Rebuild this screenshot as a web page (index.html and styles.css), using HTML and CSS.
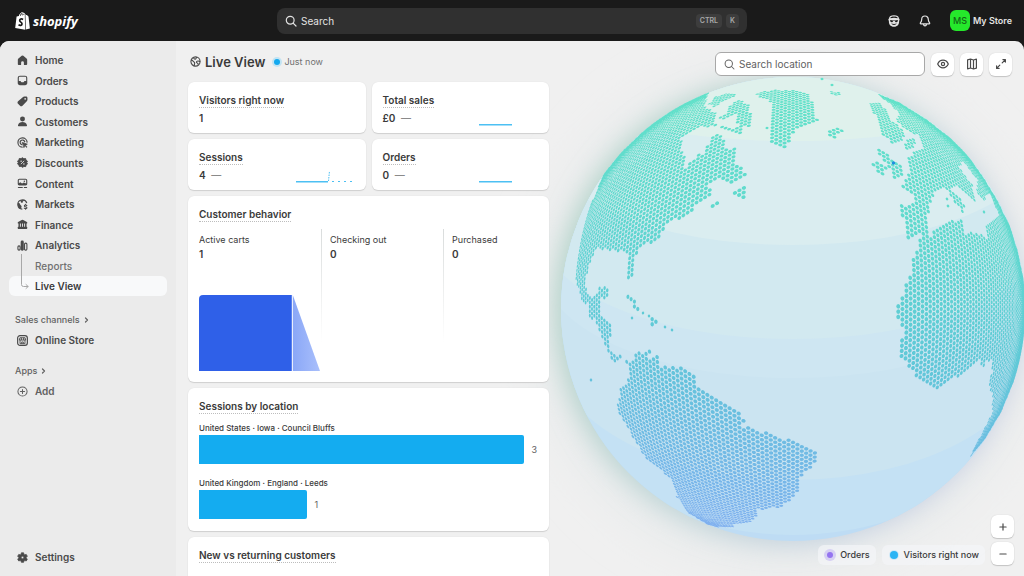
FILE: index.html
```html
<!DOCTYPE html>
<html lang="en">
<head>
<meta charset="utf-8">
<meta name="viewport" content="width=device-width, initial-scale=1">
<title>Live View · My Store</title>
<link rel="stylesheet" href="styles.css">
</head>
<body>
<header class="topbar">
  <a class="brand" href="#" aria-label="Shopify home">
    <svg class="brand-bag" viewBox="0 0 15 18" aria-hidden="true">
      <path fill="#fff" d="M1.6 4.500 9.800 2.800l.4 14.900L.2 15.900zM10.400 2.900l1.500.2 1.600 1.300 1.400 12.200-4.100 1z"/>
      <path fill="none" stroke="#fff" stroke-width="1" d="M4.200 4.500C4.600 2.200 5.800.7 7.200.7c1.200 0 1.800 1.100 1.900 2.700M6.300 4c.4-1.700 1.300-2.800 2.300-2.800.8 0 1.300.6 1.600 1.700"/>
      <path fill="none" stroke="#1a1a1a" stroke-width="1.700" d="M8.100 7.400C6.400 6.500 4.700 7 4.700 8.500c0 1.700 2.500 1.700 2.300 3.500-.1 1.500-1.900 1.800-3.500.8"/>
    </svg>
    <span class="brand-name">shopify</span>
  </a>
  <label class="global-search">
    <svg class="icon" viewBox="0 0 12 12" fill="none" stroke="currentColor" stroke-width="1.200" stroke-linecap="round"><circle cx="5.200" cy="5.200" r="3.900"/><path d="m8.100 8.100 2.900 2.900"/></svg>
    <input type="search" placeholder="Search" aria-label="Search">
    <kbd>CTRL</kbd><kbd>K</kbd>
  </label>
  <div class="account">
    <button class="top-button" type="button" aria-label="Sidekick">
      <svg class="icon" viewBox="0 0 12 12"><path fill="#e3e3e3" fill-rule="evenodd" d="M6 .3c3 0 4.800 1.200 5 3.200.8.300.9 1.800.1 2.200.3 3.700-1.600 6-5.100 6S.6 9.400.9 5.700C.1 5.300.2 3.800 1 3.500 1.200 1.500 3 .3 6 .3zM2.400 3.200c2.200-.7 5-.7 7.200 0 .4-1-1.300-1.700-3.600-1.700s-4 .7-3.600 1.700zM2.100 5.100l.4 1.700c.8.800 2.200.7 2.700-.8h1.600c.5 1.500 1.900 1.600 2.700.8l.4-1.700-3 .5H5.100zM3.200 8.600c.9 1.900 4.700 1.900 5.600 0-1.700.5-3.900.5-5.600 0z"/></svg>
    </button>
    <button class="top-button" type="button" aria-label="Notifications">
      <svg class="icon" viewBox="0 0 12 12" fill="none" stroke="#e3e3e3" stroke-width="1.200" stroke-linejoin="round" stroke-linecap="round"><path d="M6 1c-2 0-3.300 1.500-3.300 3.400 0 1.800-.6 2.600-1.300 3.500-.3.500-.1 1 .5 1h8.200c.6 0 .8-.5.5-1-.7-.9-1.300-1.700-1.300-3.500C9.300 2.500 8 1 6 1zM4.500 9.200c.1 1.100.7 1.700 1.500 1.700s1.400-.6 1.500-1.700"/></svg>
    </button>
    <button class="store" type="button"><span class="avatar">MS</span>My Store</button>
  </div>
</header>

<div class="frame">
  <nav class="sidebar" aria-label="Main">
    <ul class="nav-list">
      <li><a class="nav-item" href="#"><svg class="icon" viewBox="0 0 12 12"><path fill="currentColor" d="M5.100.9a1.400 1.400 0 0 1 1.800 0l3.500 2.900c.4.400.7.900.7 1.400v4.600c0 .7-.5 1.200-1.200 1.200H8.200c-.4 0-.7-.3-.7-.7V8.300a1.500 1.500 0 0 0-3 0v2c0 .4-.3.7-.7.7H2.100C1.400 11 .9 10.500.9 9.800V5.200c0-.5.3-1 .7-1.400z"/></svg>Home</a></li>
      <li><a class="nav-item" href="#"><svg class="icon" viewBox="0 0 12 12"><path fill="currentColor" fill-rule="evenodd" d="M3.200.8h5.600c1.400 0 2.400 1 2.400 2.400v5.600c0 1.400-1 2.400-2.400 2.400H3.200C1.800 11.200.8 10.200.8 8.800V3.200C.8 1.800 1.800.8 3.200.8zM3.300 2c-.8 0-1.300.5-1.300 1.300v3.300h1.700c.6 0 .7 1.400 1.300 1.400h2c.6 0 .7-1.400 1.300-1.400H10V3.300C10 2.500 9.500 2 8.700 2z"/></svg>Orders</a></li>
      <li><a class="nav-item" href="#"><svg class="icon" viewBox="0 0 12 12"><path fill="currentColor" fill-rule="evenodd" d="M6.300 1.300C6.800.8 7.300.6 8 .6h1.900c.9 0 1.500.6 1.500 1.500V4c0 .7-.2 1.200-.7 1.700L6 10.600c-.9.900-1.900.9-2.700.1L1.100 8.500c-.8-.8-.7-1.900.1-2.700zM8.900 2.300a.9.900 0 1 0 0 1.800.9.900 0 0 0 0-1.800z"/></svg>Products</a></li>
      <li><a class="nav-item" href="#"><svg class="icon" viewBox="0 0 12 12" fill="currentColor"><circle cx="6" cy="3.300" r="2.700"/><path d="M1.100 10c.6-2.300 2.500-3.500 4.900-3.500s4.300 1.200 4.900 3.500c.2.700-.3 1.300-1 1.300H2.100c-.7 0-1.200-.6-1-1.300z"/></svg>Customers</a></li>
      <li><a class="nav-item" href="#"><svg class="icon" viewBox="0 0 12 12" fill="none" stroke="currentColor" stroke-width="1.300" stroke-linecap="round"><path d="M5.600 11A5 5 0 1 1 11 5.600"/><path d="M5.300 8.400a2.600 2.600 0 1 1 3.200-3.200"/><path fill="currentColor" stroke-linejoin="round" stroke-width=".8" d="m6 6 5.300 1.800-2.200 1.100 1.900 1.900-.5.500-1.900-1.900-.9 1.900z"/></svg>Marketing</a></li>
      <li><a class="nav-item" href="#"><svg class="icon" viewBox="0 0 12 12"><path fill="currentColor" stroke="currentColor" stroke-linejoin="round" d="m6 .8 1.500 1.100 1.900-.2.500 1.800 1.500 1-.8 1.500.8 1.700-1.500 1-.4 1.800-1.900-.2L6 11.300l-1.500-1.100-1.900.2-.5-1.800-1.500-1L1.400 6 .6 4.400l1.500-1 .4-1.800 1.900.2z"/><path stroke="#ebebeb" stroke-width=".9" d="m4.200 7.800 3.600-3.600"/><circle cx="4.500" cy="4.500" r=".8" fill="#ebebeb"/><circle cx="7.500" cy="7.500" r=".8" fill="#ebebeb"/></svg>Discounts</a></li>
      <li><a class="nav-item" href="#"><svg class="icon" viewBox="0 0 12 12"><path fill="currentColor" fill-rule="evenodd" d="M2.600.9h6.800c1 0 1.800.8 1.800 1.800v3.600c0 1-.8 1.800-1.800 1.800H2.600c-1 0-1.800-.8-1.800-1.800V2.700c0-1 .8-1.800 1.800-1.800zM2 5.600l1.600-1.100 1.900 1.400 2-1L10 6V2.700C10 2.400 9.800 2 9.400 2H2.600c-.4 0-.6.300-.6.700zM8 2.800a.8.800 0 1 1 0 1.600.8.800 0 0 1 0-1.600z"/><path stroke="currentColor" stroke-linecap="round" stroke-width="1.200" d="M1.500 10.400h4.300M8 10.400h2.500"/></svg>Content</a></li>
      <li><a class="nav-item" href="#"><svg class="icon" viewBox="0 0 12 12"><path fill="none" stroke="currentColor" stroke-width="1.200" d="M5.800 11A5 5 0 1 1 10.700 4.500"/><path fill="currentColor" d="M1 4c1.500.2 2.300.8 2.500 1.900.2 1 1.700 1 1.500 2.300L4.400 11C2 10.500.6 8 .8 5.600zM4 1.300l3.500-.2c-.2 1.400-1.200 1.100-1.300 2.400C6 4.700 4.500 4.300 4 3.300z"/><path fill="none" stroke="currentColor" stroke-width="1.200" stroke-linecap="round" d="M10.700 7.100C9.500 6.200 8 6.600 8 7.500c0 1.300 2.800.6 2.800 2 0 1-1.700 1.300-2.900.4M9.400 5.900v.7M9.400 10.200v.9"/></svg>Markets</a></li>
      <li><a class="nav-item" href="#"><svg class="icon" viewBox="0 0 12 12" fill="currentColor"><path d="M5.200 1a1.500 1.500 0 0 1 1.600 0l4 2.200c.8.500.5 1.700-.4 1.700H1.600c-.9 0-1.200-1.200-.4-1.700zM1.600 5h1.600v4H1.600zM4.200 5h1.300v4H4.200zM6.500 5h1.300v4H6.500zM8.800 5h1.600v4H8.800zM1.400 8.500h9.200c.8 0 1 2.300 0 2.300H1.400c-1 0-.8-2.300 0-2.300z"/></svg>Finance</a></li>
      <li><a class="nav-item" href="#"><svg class="icon" viewBox="0 0 12 12"><rect x="1" y="6.400" width="2.400" height="4.600" rx="1.100" fill="none" stroke="currentColor" stroke-width="1.200"/><rect x="4" y=".6" width="3.400" height="11" rx="1.500" fill="currentColor"/><rect x="8.200" y="3.400" width="2.600" height="7.600" rx="1.200" fill="none" stroke="currentColor" stroke-width="1.200"/></svg>Analytics</a></li>
      <li><a class="nav-item nav-sub" href="#"><span class="branch"></span>Reports</a></li>
      <li><a class="nav-item nav-sub nav-current" href="#" aria-current="page"><svg class="branch-end" viewBox="0 0 12 20" fill="none" stroke="#a8a8a8" stroke-linecap="round" stroke-linejoin="round"><path d="M4.500 0v8.500a2 2 0 0 0 2 2h4.500M9 8.500l2.200 2L9 12.500"/></svg>Live View</a></li>
    </ul>

    <section class="nav-group">
      <button class="nav-heading" type="button">Sales channels<svg class="chevron" viewBox="0 0 6 8" fill="none" stroke="currentColor" stroke-width="1.200" stroke-linecap="round" stroke-linejoin="round"><path d="m1.500 2 2 2-2 2"/></svg></button>
      <a class="nav-item" href="#"><svg class="icon" viewBox="0 0 12 12" fill="none" stroke="currentColor"><rect x=".7" y=".7" width="10.600" height="10.600" rx="2.600" stroke-width="1.300"/><path d="M2.500 5.500 3.200 3h5.600l.7 2.500zM3.300 5.500v4h5.400v-4M5.100 9.500V7.600h1.800v1.900M4.800 3v2.500M7.200 3v2.500"/></svg>Online Store</a>
    </section>
    <section class="nav-group">
      <button class="nav-heading" type="button">Apps<svg class="chevron" viewBox="0 0 6 8" fill="none" stroke="currentColor" stroke-width="1.200" stroke-linecap="round" stroke-linejoin="round"><path d="m1.500 2 2 2-2 2"/></svg></button>
      <a class="nav-item nav-muted" href="#"><svg class="icon" viewBox="0 0 12 12" fill="none" stroke="currentColor" stroke-width="1.100" stroke-linecap="round"><circle cx="6" cy="6" r="5"/><path d="M6 3.700v4.600M3.700 6h4.600"/></svg>Add</a>
    </section>
    <a class="nav-item nav-settings" href="#"><svg class="icon" viewBox="0 0 12 12"><path fill="currentColor" stroke="currentColor" stroke-width=".8" stroke-linejoin="round" fill-rule="evenodd" d="M4.800.9h2.400l.4 1.700.9.500 1.600-.5 1.200 2-1.200 1.200v.8l1.200 1.200-1.200 2-1.600-.5-.9.500-.4 1.500H4.800l-.4-1.500-.9-.5-1.600.5-1.200-2 1.200-1.200v-.8L.7 4.600l1.200-2 1.600.5.9-.5zM6 4.600a1.400 1.400 0 1 0 0 2.800 1.400 1.400 0 0 0 0-2.800z"/></svg>Settings</a>
  </nav>

  <main class="content">
    <svg class="globe" viewBox="500 41 524 535" role="img" aria-label="Globe showing live visitors">
      <defs>
        <linearGradient id="land" gradientUnits="userSpaceOnUse" x1="800" y1="90" x2="760" y2="530">
          <stop offset="0" stop-color="#62e2c9"/><stop offset=".3" stop-color="#60d9ce"/><stop offset=".55" stop-color="#5fcad6"/><stop offset=".72" stop-color="#68c0de"/><stop offset="1" stop-color="#80b0ef"/>
        </linearGradient>
        <linearGradient id="glow" x1="0" y1=".2" x2="1" y2=".7">
          <stop offset="0" stop-color="#b0d3c6"/><stop offset=".45" stop-color="#bed5d6"/><stop offset="1" stop-color="#c9cfe6"/>
        </linearGradient>
        <filter id="soft" x="-30%" y="-30%" width="160%" height="160%"><feGaussianBlur stdDeviation="12"/></filter>
        <filter id="haze" x="-40%" y="-40%" width="180%" height="180%"><feGaussianBlur stdDeviation="24"/></filter>
        <clipPath id="disc"><circle cx="793" cy="309" r="232"/></clipPath>
      </defs>
      <circle cx="785" cy="315" r="250" fill="#e5e9ea" filter="url(#haze)"/>
      <circle cx="788" cy="311" r="233" fill="url(#glow)" filter="url(#soft)"/>
      <g clip-path="url(#disc)">
        <rect x="560" y="76" width="466" height="466" fill="#bedcf4"/>
        <ellipse cx="793" cy="345" rx="250" ry="190" fill="#c4e1f4"/>
        <ellipse cx="793" cy="340" rx="245" ry="140" fill="#cbe4f1"/>
        <path fill="#cbe4f1" d="M548 60h490v280H548z"/>
        <ellipse cx="793" cy="268" rx="250" ry="110" fill="#cee6f2"/>
        <path fill="#cee6f2" d="M548 60h490v208H548z"/>
        <ellipse cx="793" cy="233" rx="250" ry="106" fill="#d2e9f0"/>
        <path fill="#d2e9f0" d="M548 60h490v173H548z"/>
        <ellipse cx="793" cy="145" rx="245" ry="100" fill="#daedf0"/>
        <path fill="#daedf0" d="M548 60h490v85H548z"/>
        <ellipse cx="793" cy="96" rx="200" ry="45" fill="#dff1ec"/>
      </g>
      <path id="dots" fill="url(#land)"/>
      <circle cx="893.500" cy="163" r="1.700" fill="#1e8fe0"/>
    </svg>

    <div class="report">
      <div class="page-title">
        <svg class="icon" viewBox="0 0 12 12" fill="none" stroke="currentColor" stroke-width="1.200" stroke-linejoin="round"><circle cx="6" cy="6" r="5"/><path d="M1.200 4.500c1.500 0 1.900.4 2.300 1.300.4 1 1.700.7 1.600 1.900L4.500 11M4 1.500c.1 1.600.8 2 1.800 1.900C7 3.200 6.500 1.800 7.500 1.200M11 6.300C9.500 5 7.300 5.200 7 6.500c-.2 1.200 1.100 1.300 1.600 1.600.5.400.3 1.400.2 2"/></svg>
        <h1>Live View</h1>
        <span class="pulse"></span>
        <span class="updated">Just now</span>
      </div>

      <div class="stats">
        <section class="card stat"><h2>Visitors right now</h2><p class="value">1</p></section>
        <section class="card stat"><h2>Total sales</h2><p class="value">£0 <span class="trend">—</span></p>
          <svg class="spark" viewBox="0 0 58 16"><path fill="#4cc0f3" d="M0 12h33v1.500H0z"/></svg></section>
        <section class="card stat"><h2>Sessions</h2><p class="value">4 <span class="trend">—</span></p>
          <svg class="spark" viewBox="0 0 58 16"><path fill="#4cc0f3" d="M0 12h32v1.500H0zM36 12h2v1h-2zM42 12h2v1h-2zM48 12h2v1h-2zM54 12h2v1h-2z"/><path fill="none" stroke="#4cc0f3" stroke-dasharray="1.500 1" d="m32.500 12 1-10"/></svg></section>
        <section class="card stat"><h2>Orders</h2><p class="value">0 <span class="trend">—</span></p>
          <svg class="spark" viewBox="0 0 58 16"><path fill="#4cc0f3" d="M0 12h33v1.500H0z"/></svg></section>
      </div>

      <section class="card">
        <h2>Customer behavior</h2>
        <dl class="funnel">
          <div class="stage"><dt>Active carts</dt><dd>1</dd>
            <svg class="funnel-shape" viewBox="0 0 120 76" preserveAspectRatio="none" aria-hidden="true"><defs><linearGradient id="fade"><stop offset="0" stop-color="#8aa7f7"/><stop offset="1" stop-color="#a9bffb"/></linearGradient></defs><path fill="#2f60e8" d="M0 76V4a4 4 0 0 1 4-4h88v76z"/><path fill="url(#fade)" d="M93 0v76h27z"/></svg>
          </div>
          <div class="stage"><dt>Checking out</dt><dd>0</dd></div>
          <div class="stage"><dt>Purchased</dt><dd>0</dd></div>
        </dl>
      </section>

      <section class="card">
        <h2>Sessions by location</h2>
        <ul class="bars">
          <li><span class="bar-label">United States · Iowa · Council Bluffs</span><div class="bar-row"><span class="bar" style="width:96%"></span>3</div></li>
          <li><span class="bar-label">United Kingdom · England · Leeds</span><div class="bar-row"><span class="bar" style="width:32%"></span>1</div></li>
        </ul>
      </section>

      <section class="card card-last"><h2>New vs returning customers</h2></section>
    </div>

    <div class="map-tools">
      <label class="map-search">
        <svg class="icon" viewBox="0 0 12 12" fill="none" stroke="currentColor" stroke-width="1.100" stroke-linecap="round"><circle cx="5.200" cy="5.200" r="4"/><path d="m8.200 8.200 2.700 2.700"/></svg>
        <input type="search" placeholder="Search location" aria-label="Search location">
      </label>
      <button class="tool" type="button" aria-label="Display options"><svg class="icon" viewBox="0 0 12 12" fill="none" stroke="currentColor" stroke-width="1.200"><path d="M.7 6C1.800 3.500 3.700 2.200 6 2.200S10.200 3.500 11.300 6C10.200 8.500 8.300 9.800 6 9.800S1.800 8.500.7 6z"/><circle cx="6" cy="6" r="1.600"/></svg></button>
      <button class="tool" type="button" aria-label="Flat map"><svg class="icon" viewBox="0 0 12 12" fill="none" stroke="currentColor" stroke-width="1.200" stroke-linejoin="round"><path d="M1.600 1.800 4.500 1l3 1 2.900-.8v9l-2.900.8-3-1-2.900.8zM4.500 1v9M7.500 2v9"/></svg></button>
      <button class="tool" type="button" aria-label="Full screen"><svg class="icon" viewBox="0 0 12 12" fill="none" stroke="currentColor" stroke-width="1.200" stroke-linecap="round" stroke-linejoin="round"><path d="M7.900 1.600h2.500v2.500M10.200 1.800 7.200 4.800M4.100 10.400H1.600V7.900M1.800 10.200l3-3"/></svg></button>
    </div>

    <div class="map-footer">
      <span class="legend"><i class="key key-orders"></i>Orders</span>
      <span class="legend"><i class="key key-visitors"></i>Visitors right now</span>
      <div class="zoom">
        <button class="tool" type="button" aria-label="Zoom in"><svg class="icon" viewBox="0 0 12 12" stroke="currentColor" stroke-width="1.200" stroke-linecap="round"><path d="M6 2.900v6.200M2.900 6h6.200"/></svg></button>
        <button class="tool" type="button" aria-label="Zoom out"><svg class="icon" viewBox="0 0 12 12" stroke="currentColor" stroke-width="1.200" stroke-linecap="round"><path d="M2.900 6h6.200"/></svg></button>
      </div>
    </div>
  </main>
</div>
<script src="globe.js"></script>
</body>
</html>
```
FILE: styles.css
```css
* { box-sizing: border-box; }

body {
  margin: 0;
  height: 100vh;
  display: flex;
  flex-direction: column;
  overflow: hidden;
  background: #1a1a1a;
  color: #3a3a3a;
  font: 600 10px/14px Inter, "Liberation Sans", sans-serif;
}

h1, h2, p, ul, dl, dd { margin: 0; padding: 0; }
ul { list-style: none; }
a { color: inherit; text-decoration: none; }
button, input { font: inherit; color: inherit; border: 0; padding: 0; background: none; }
input { flex: 1; min-width: 0; outline: 0; }
.icon { width: 12px; height: 12px; flex: none; display: block; }

/* Top bar */
.topbar {
  display: grid;
  grid-template-columns: 1fr minmax(200px, 470px) 1fr;
  align-items: center;
  height: 41px;
  flex: none;
  padding: 0 12px;
}
.brand { display: flex; align-items: center; gap: 3px; padding-left: 3px; color: #fff; }
.brand-bag { width: 15px; height: 18px; }
.brand-name { font: italic 700 13px/18px "Open Sans", sans-serif; }
.global-search {
  display: flex;
  align-items: center;
  gap: 4px;
  height: 26px;
  padding: 0 8px;
  border-radius: 8px;
  background: #303030;
  color: #e3e3e3;
}
.global-search input::placeholder { color: #e3e3e3; opacity: 1; font-weight: 400; }
kbd {
  padding: 0 4px;
  border-radius: 4px;
  background: #3d3d3d;
  color: #a8a8a8;
  font: 600 7px/14px Inter, sans-serif;
}
.account { display: flex; align-items: center; justify-content: flex-end; gap: 19px; }
.store { display: flex; align-items: center; gap: 3px; color: #e3e3e3; font-size: 9px; }
.avatar {
  width: 20px;
  border-radius: 6px;
  background: #25e82b;
  color: #136617;
  font: 500 9px/21px Inter, sans-serif;
}

/* Shell */
.frame {
  flex: 1;
  min-height: 0;
  display: flex;
  overflow: hidden;
  border-radius: 9px 9px 0 0;
  background: #f0f0f0;
}

/* Sidebar */
.sidebar {
  flex: none;
  width: 176px;
  display: flex;
  flex-direction: column;
  padding: 9px 9px;
  background: #ebebeb;
}
.nav-list { display: grid; grid-auto-rows: 1fr; height: 247px; margin-bottom: 2px; }
.nav-item {
  position: relative;
  display: flex;
  align-items: center;
  gap: 7px;
  height: 20px;
  padding: 0 8px;
  border-radius: 6px;
  color: #4a4a4a;
}
.nav-item .icon { width: 11px; height: 11px; }
.nav-sub { padding-left: 26px; color: #707070; font-weight: 500; }
.nav-current { background: #f8f9fa; color: #3a3a3a; font-weight: 600; }
.nav-muted { color: #616161; }
.branch { position: absolute; left: 12px; top: -2px; bottom: -2px; border-left: 1px solid #a8a8a8; }
.branch-end { position: absolute; left: 8px; top: 0; width: 12px; height: 20px; }
.nav-group { padding-top: 13px; }
.nav-heading {
  display: flex;
  align-items: center;
  gap: 4px;
  height: 15px;
  margin-bottom: 3px;
  padding-left: 6px;
  color: #616161;
  font-size: 9px;
  font-weight: 500;
}
.chevron { width: 6px; height: 8px; }
.nav-settings { margin-top: auto; }

/* Main */
.content {
  position: relative;
  flex: 1;
  min-width: 0;
  display: flex;
  align-items: flex-start;
  justify-content: space-between;
  padding: 0 12px;
}
.globe { position: absolute; right: 0; top: 0; width: 524px; height: 535px; }
.report { position: relative; width: 361px; flex: none; display: grid; gap: 6px; }

.page-title { display: flex; align-items: center; height: 35px; padding: 6px 2px 0; color: #4a4a4a; }
.page-title .icon { width: 11px; height: 11px; }
.page-title h1 { margin-left: 4px; font-size: 13px; line-height: 20px; font-weight: 600; color: #3a3a3a; }
.pulse { width: 6px; height: 6px; margin: 0 4px 0 9px; border-radius: 50%; background: #14a9ef; box-shadow: 0 0 0 2px #c3e4f3; }
.updated { font-size: 9px; color: #707070; font-weight: 400; }

.stats { display: grid; grid-template-columns: 1fr 1fr; gap: 6px; }
.card {
  padding: 11px 11px;
  border-radius: 6px;
  background: #fff;
  box-shadow: 0 1px 1px #cfcfcf, 0 0 1px #d8d8d8;
}
.card h2 {
  width: fit-content;
  border-bottom: 1px dotted #bdbdbd;
  font-size: 10px;
  line-height: 14px;
  font-weight: 600;
}
.stat { position: relative; padding-bottom: 8px; }
.value { margin-top: 3px; }
.trend { margin-left: 3px; color: #8a8a8a; font-weight: 500; }
.spark { position: absolute; right: 12px; bottom: 5px; width: 58px; height: 16px; }

.funnel { display: grid; grid-template-columns: 36% 36% 28%; margin-top: 7px; }
.stage { padding: 4px 8px 0; border-left: 1px solid; border-image: linear-gradient(#d9dcdc, #fff 80%) 1; height: 142px; display: flex; flex-direction: column; }
.stage:first-child { padding: 4px 1px 0 0; border: 0; }
.funnel dt { font-size: 9px; font-weight: 400; }
.funnel-shape { width: 100%; height: 76px; margin-top: auto; }

.bars { display: grid; gap: 12px; margin-top: 7px; padding-bottom: 1px; }
.bar-label { display: block; font-size: 8px; line-height: 14px; font-weight: 500; }
.bar-row { display: flex; align-items: center; gap: 7px; color: #616161; font-size: 9px; font-weight: 400; }
.bar { height: 29px; border-radius: 0 2px 2px 0; background: #14acf0; }
.card-last { height: 120px; }

/* Map controls */
.map-tools { position: relative; display: flex; align-items: center; gap: 6px; padding-top: 11px; }
.map-search {
  display: flex;
  align-items: center;
  gap: 4px;
  width: 210px;
  height: 24px;
  padding: 0 8px;
  border: 1px solid #a8a8a8;
  border-radius: 6px;
  background: #fff;
  color: #616161;
  font-weight: 400;
}
.map-search .icon { width: 11px; height: 11px; }
.map-search input::placeholder { color: #616161; opacity: 1; }
.tool {
  display: grid;
  place-items: center;
  width: 23px;
  height: 23px;
  border-radius: 6px;
  background: #fff;
  color: #4a4a4a;
  box-shadow: 0 1px 1px #c4c4c4, 0 0 1px #c4c4c4;
}
.map-footer { position: absolute; right: 10px; bottom: 11px; display: flex; align-items: flex-end; gap: 6px; }
.legend {
  display: flex;
  align-items: center;
  gap: 5px;
  height: 20px;
  padding: 0 6px 0 8px;
  border-radius: 6px;
  background: rgba(243, 245, 248, 0.7);
  font-size: 9px;
  font-weight: 500;
}
.key { width: 6px; height: 6px; margin: 0 2px 0 1px; border-radius: 50%; }
.key-orders { background: #9474f0; box-shadow: 0 0 0 3px #d6d0f3; }
.key-visitors { width: 8px; height: 8px; margin: 0 1px 0 0; background: #2cb4f4; box-shadow: 0 0 0 1px #cfe8f8; }
.zoom { display: grid; gap: 4px; }
```
FILE: globe.js
```js
// Outlines of the visible land masses, in the globe's own coordinates.
const land = [
  // North and Central America
  [708,92, 705,107, 715,112, 716,127, 700,127, 682,137, 681,147, 685,157, 684,169, 693,160, 698,153, 705,153, 710,140, 717,133, 724,138, 724,150, 735,147, 737,165, 747,172, 746,178, 732,183, 717,179, 703,187, 713,190, 708,201, 697,204, 687,216, 670,222, 660,233, 658,241, 640,247, 635,257, 634,270, 629,282, 627,268, 629,258, 625,252, 612,250, 597,248, 590,263, 587,273, 586,287, 590,298, 596,297, 599,288, 608,288, 608,295, 601,300, 600,315, 612,323, 612,328, 609,342, 608,347, 615,356, 622,356, 617,364, 610,356, 604,343, 595,320, 590,318, 588,303, 582,302, 575,277, 580,247, 583,230, 586,217, 594,197, 604,174, 621,153, 653,122, 683,103],
  // Arctic islands
  [709,104, 713,98, 723,94, 737,93, 735,97, 724,101, 714,108],
  [717,120, 725,114, 731,104, 740,99, 748,105, 748,126, 741,127, 740,135, 729,131, 738,126, 735,113, 727,119],
  [750,112, 752,112, 751,127, 748,127], [718,126, 733,129, 732,133, 719,129],
  [730,195, 738,187, 747,188, 747,201, 742,201, 741,195, 733,197],
  [707,206, 713,202, 720,204, 719,207, 710,209],
  // Greenland
  [754,93, 773,90, 795,90, 807,93, 810,101, 815,103, 817,120, 800,128, 792,135, 787,148, 780,148, 772,145, 771,102, 760,97],
  // Iceland, Svalbard
  [826,130, 833,129, 840,126, 843,130, 836,138, 829,136], [830,91, 842,93, 842,96, 831,94],
  // Scandinavia
  [868,103, 881,102, 887,113, 892,121, 905,131, 904,138, 893,144, 882,134, 880,125, 874,113],
  [903,146, 909,139, 916,136, 914,145, 908,152],
  // Great Britain, Ireland
  [873,148, 882,150, 895,161, 903,165, 905,174, 893,178, 889,167, 880,156],
  [877,159, 886,167, 884,174, 876,175, 873,165],
  // Europe, western Asia and Africa
  [876,93, 900,103, 927,120, 950,138, 967,155, 983,177, 997,200, 1010,227, 1018,253, 1024,283, 1025,333, 1017,373, 1001,412, 984,440, 970,457, 980,437, 992,413, 993,397, 988,385, 992,373, 991,360, 985,363, 983,369, 979,360, 962,375, 947,381, 936,389, 918,377, 903,361, 899,352, 903,332, 898,318, 896,307, 901,300, 906,282, 913,273, 913,258, 919,247, 919,238, 930,235, 950,222, 961,219, 964,233, 977,233, 988,239, 985,228, 989,223, 999,216, 990,193, 983,201, 976,190, 977,180, 963,161, 959,167, 972,185, 977,205, 969,197, 957,187, 950,188, 957,194, 965,207, 963,214, 953,199, 943,186, 931,198, 928,217, 927,233, 907,238, 907,227, 902,217, 899,205, 917,203, 911,192, 902,186, 910,172, 908,157, 914,153, 923,148, 919,136, 908,130, 896,122, 899,113, 890,104],
  // Cuba and Hispaniola
  [625,291, 631,295, 639,308, 635,312, 630,301], [651,318, 660,323, 658,327, 650,326],
  // South America
  [626,359, 632,362, 638,352, 650,351, 648,358, 660,354, 661,365, 682,367, 694,372, 694,383, 710,395, 720,398, 735,407, 746,420, 737,426, 749,427, 768,433, 793,441, 815,450, 820,457, 812,466, 802,473, 799,490, 790,500, 782,507, 758,510, 757,516, 750,522, 733,524, 733,527, 717,527, 707,524, 687,512, 677,497, 670,478, 643,455, 628,428, 617,410, 621,386, 628,383, 628,370],
];
// Islands small enough to be a single dot.
const islets = [[643,313], [649,316], [632,318], [665,327], [672,330], [591,380], [947,199], [948,206], [984,212], [767,128], [822,79], [832,85]];

const CX = 793, CY = 309, R = 232, DIST = 3;
const FOCAL = R * Math.sqrt(DIST * DIST - 1);
const STEP = 0.0168;

function inside(p, x, y) {
  let hit = false;
  for (let i = 0, j = p.length - 2; i < p.length; j = i, i += 2) {
    if ((p[i + 1] > y) !== (p[j + 1] > y) &&
        x < (p[j] - p[i]) * (y - p[i + 1]) / (p[j + 1] - p[i + 1]) + p[i]) hit = !hit;
  }
  return hit;
}

// A round dot, flattened along the direction that points away from the centre.
function dot(x, y, size, squash, angle) {
  const c = Math.cos(angle), s = Math.sin(angle);
  const pts = [];
  for (let k = 0; k < 8; k++) {
    const t = k * Math.PI / 4;
    const u = size * squash * Math.cos(t), v = size * Math.sin(t);
    pts.push((x + u * c - v * s).toFixed(1) + " " + (y + u * s + v * c).toFixed(1));
  }
  return "M" + pts.join("L") + "Z";
}

let d = "";
const rows = Math.ceil(1.75 / STEP);
for (let row = -rows; row <= rows; row++) {
  for (let col = -rows; col <= rows; col++) {
    const px = col * STEP * 0.866;
    const py = (row + (col & 1) / 2) * STEP;
    const r = Math.hypot(px, py);
    const c = 2 * Math.asin(Math.min(1, r / 2));
    const z = Math.cos(c);
    if (z < 1 / DIST + 0.005) continue;
    const angle = Math.atan2(py, px);
    const scale = FOCAL / (DIST - z);
    const x = CX + Math.sin(c) * scale * Math.cos(angle);
    const y = CY + Math.sin(c) * scale * Math.sin(angle);
    if (!land.some(p => inside(p, x, y))) continue;
    const squash = Math.max(0.25, (DIST * z - 1) / (DIST - z));
    d += dot(x, y, STEP * scale * 0.43, squash, angle);
  }
}
for (const [x, y] of islets) d += dot(x, y, 1.6, 0.8, Math.atan2(y - CY, x - CX));
document.getElementById("dots").setAttribute("d", d);
```
